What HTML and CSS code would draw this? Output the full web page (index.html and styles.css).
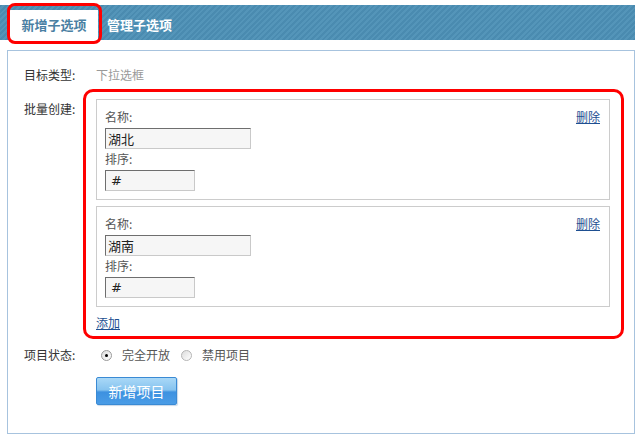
FILE: index.html
```html
<!DOCTYPE html>
<html lang="zh-CN">
<head>
<meta charset="utf-8">
<title>新增子选项</title>
<link rel="stylesheet" href="styles.css">
</head>
<body>
<div class="page">
  <div class="tabs">
    <div class="tab active">新增子选项</div>
    <div class="tab">管理子选项</div>
    <div class="mark mark-tab"></div>
  </div>
  <div class="panel">
    <div class="row">
      <div class="label">目标类型:</div>
      <div class="value muted">下拉选框</div>
    </div>
    <div class="row row-batch">
      <div class="label">批量创建:</div>
      <div class="batch">
        <div class="item">
          <div class="item-head"><span class="item-label">名称:</span><a class="link" href="#">删除</a></div>
          <div class="input name">湖北</div>
          <div class="item-label second">排序:</div>
          <div class="input order">#</div>
        </div>
        <div class="item">
          <div class="item-head"><span class="item-label">名称:</span><a class="link" href="#">删除</a></div>
          <div class="input name">湖南</div>
          <div class="item-label second">排序:</div>
          <div class="input order">#</div>
        </div>
        <a class="link add" href="#">添加</a>
        <div class="mark mark-batch"></div>
      </div>
    </div>
    <div class="row row-status">
      <div class="label">项目状态:</div>
      <div class="radios">
        <span class="radio checked"></span><span class="radio-text">完全开放</span>
        <span class="radio second-radio"></span><span class="radio-text">禁用项目</span>
      </div>
    </div>
    <div class="row row-btn">
      <div class="label"></div>
      <button class="btn" type="button">新增项目</button>
    </div>
  </div>
</div>
</body>
</html>
```

FILE: styles.css
```css
* { box-sizing: border-box; }
html, body { margin: 0; padding: 0; background: #fff; }
body {
  font-family: "Noto Sans CJK SC", "Liberation Sans", sans-serif;
  font-size: 12px;
  color: #333;
}
.page { width: 635px; }

.tabs {
  position: relative;
  margin-top: 5px;
  height: 35px;
  padding: 5px 0 0 10px;
  display: flex;
  background-color: #4a8db2;
  background-image: repeating-linear-gradient(-45deg, #4a8bb0 0, #4a8bb0 2px, #5495b9 2px, #5495b9 4px);
}
.tab {
  height: 30px;
  line-height: 30px;
  font-size: 13px;
  font-weight: bold;
  color: #fff;
  padding: 0 9px;
}
.tab.active {
  width: 88px;
  padding: 0;
  text-align: center;
  background: #fff;
  color: #4a80a3;
}

.mark {
  position: absolute;
  border: 3px solid #ff0000;
  pointer-events: none;
}
.mark-tab {
  left: 7px;
  top: -2px;
  width: 95px;
  height: 41px;
  border-radius: 8px;
}

.panel {
  margin: 10px 0 0 7px;
  width: 628px;
  height: 384px;
  border: 1px solid #a7c3de;
  padding: 14px 0 0 16px;
}
.row {
  display: flex;
  line-height: 20px;
}
.label {
  width: 72px;
  flex: none;
  color: #333;
}
.muted { color: #999; }
.row-batch { margin-top: 14px; }
.batch {
  position: relative;
  width: 514px;
}
.item {
  border: 1px solid #cccccc;
  padding: 8px 9px 8px 8px;
}
.item + .item { margin-top: 6px; }
.item-head {
  display: flex;
  justify-content: space-between;
  line-height: 18px;
}
.item-label {
  line-height: 18px;
  color: #555;
}
.item-label.second { margin-top: 1px; }
.input {
  margin-top: 2px;
  height: 21px;
  border-style: solid;
  border-width: 1px;
  border-color: #6e6e6e #c9c9c9 #c9c9c9 #6e6e6e;
  background: #f6f6f6;
  font-size: 13px;
  line-height: 19px;
  padding-left: 2px;
  color: #222;
}
.input.name { width: 146px; }
.input.order {
  width: 90px;
  padding-left: 5px;
  font-family: "DejaVu Sans", sans-serif;
  font-style: italic;
  font-size: 13px;
}
.link {
  color: #1e4f91;
  text-decoration: underline;
}
.add {
  display: inline-block;
  margin-top: 6px;
  line-height: 20px;
}
.mark-batch {
  left: -13px;
  top: -10px;
  right: -14px;
  bottom: -6px;
  border-radius: 10px;
}

.row-status { margin-top: 12px; }
.radios {
  display: flex;
  align-items: center;
  color: #555;
}
.radio {
  position: relative;
  width: 11px;
  height: 11px;
  margin-left: 5px;
  border-radius: 50%;
  border: 1px solid #9a9a9a;
  background: linear-gradient(135deg, #dcdcdc, #ffffff);
}
.radio.checked::after {
  content: "";
  position: absolute;
  left: 3px;
  top: 3px;
  width: 3px;
  height: 3px;
  border-radius: 50%;
  background: #000;
}
.radio.second-radio {
  margin-left: 11px;
  border-color: #b5b5b5;
}
.radio-text { margin-left: 10px; }

.row-btn { margin-top: 12px; }
.btn {
  width: 81px;
  height: 28px;
  padding: 0;
  border: 1px solid #3a8ad4;
  border-radius: 2px;
  background: linear-gradient(#a9d8f7 0%, #86c3ef 46%, #3d91e0 54%, #4a9ce6 100%);
  color: #fff;
  font-family: "Noto Sans CJK SC", sans-serif;
  font-size: 14px;
  line-height: 26px;
  box-shadow: 1px 1px 1px #c8d8e8;
  cursor: pointer;
}
```
